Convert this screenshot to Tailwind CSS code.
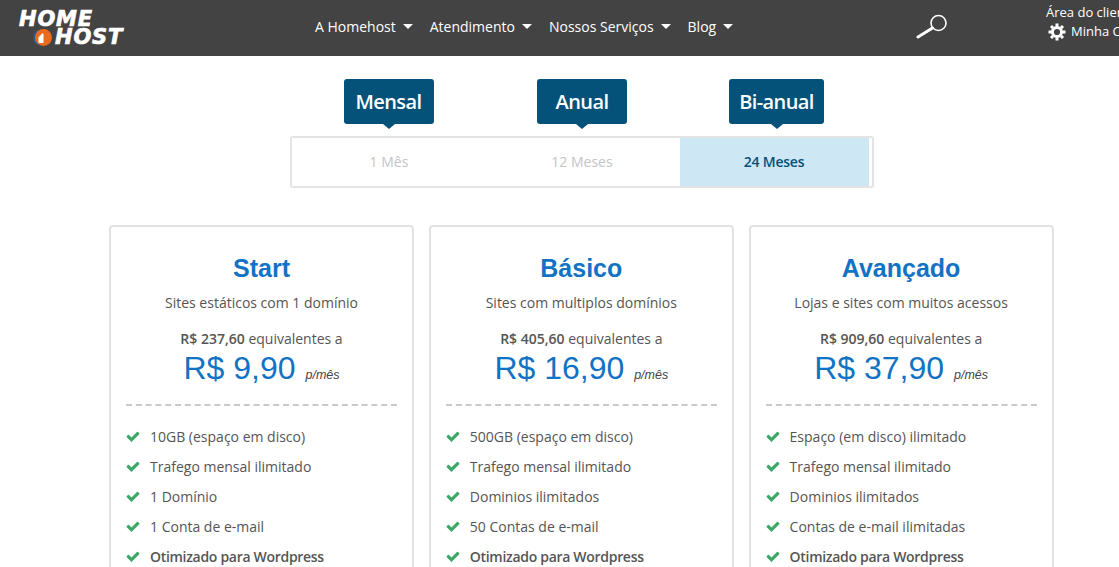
<!DOCTYPE html>
<html lang="pt-BR">
<head>
  <meta charset="UTF-8" />
  <title>Homehost - Planos</title>
  <script src="https://cdn.jsdelivr.net/npm/@tailwindcss/browser@4"></script>
</head>
<body class="bg-white h-[567px] w-[1119px] overflow-hidden font-['Open_Sans',sans-serif] text-[#555]">

  <!-- Topo -->
  <header class="h-14 bg-[#434343] flex items-center text-white relative overflow-hidden">
    <div class="w-[315px] shrink-0 pl-[19px]">
      <div class="font-['DejaVu_Sans',sans-serif] font-bold italic text-[21px] leading-[18px] tracking-[0.8px] [-webkit-text-stroke:0.7px_white]">
        <div>HOME</div>
        <div class="flex items-center pl-[14px]">
          <svg width="20" height="19" viewBox="0 0 20 19" class="shrink-0 mr-[2px]">
            <circle cx="8" cy="9.5" r="8" fill="#1f5f99" />
            <circle cx="10.5" cy="9.5" r="8.5" fill="#ec6a1c" />
            <path d="M5.5 9.5l4-4.5 1 1.5v8.5H5.500z" fill="#fff" />
          </svg>
          <span>HOST</span>
        </div>
      </div>
    </div>
    <nav class="flex items-center gap-[17px] text-[14px] whitespace-nowrap shrink-0 -mt-[4px]">
      <a class="flex items-center gap-[7px]">A Homehost <span class="w-0 h-0 border-x-[5px] border-x-transparent border-t-[5px] border-t-white"></span></a>
      <a class="flex items-center gap-[7px]">Atendimento <span class="w-0 h-0 border-x-[5px] border-x-transparent border-t-[5px] border-t-white"></span></a>
      <a class="flex items-center gap-[7px]">Nossos Serviços <span class="w-0 h-0 border-x-[5px] border-x-transparent border-t-[5px] border-t-white"></span></a>
      <a class="flex items-center gap-[7px]">Blog <span class="w-0 h-0 border-x-[5px] border-x-transparent border-t-[5px] border-t-white"></span></a>
    </nav>
    <svg width="34" height="26" viewBox="0 0 34 26" class="ml-[182px] shrink-0 -mt-[4px]" fill="none" stroke="#fff">
      <circle cx="23.500" cy="10" r="7.500" stroke-width="1.600" />
      <path d="M17.500 15L3 24" stroke-width="3" stroke-linecap="round" />
    </svg>
    <div class="absolute left-[1046px] top-[3px] text-[13px] leading-[19px] whitespace-nowrap">
      <div>Área do cliente</div>
      <div class="flex items-center gap-[5px] pl-[2px]">
        <svg width="18" height="18" viewBox="0 0 18 18" fill="none" stroke="#fff">
          <circle cx="9" cy="9" r="4.600" stroke-width="3" />
          <path d="M9 0.500v3M9 14.500v3M0.500 9h3M14.500 9h3M3 3l2 2M13 13l2 2M15 3l-2 2M5 13l-2 2" stroke-width="3" />
        </svg>
        <span>Minha Conta</span>
      </div>
    </div>
  </header>

  <!-- Periodo -->
  <section class="w-[584px] ml-[290px] mt-[23px]">
    <div class="flex pl-[54px] gap-[103px]">
      <div class="relative w-[90px] h-[45px] bg-[#04517a] rounded-[3px] text-white font-semibold text-[20px] tracking-[-0.6px] flex items-center justify-center pr-[1px]">
        Mensal
        <span class="absolute left-1/2 -translate-x-1/2 top-full w-0 h-0 border-x-[6px] border-x-transparent border-t-[5px] border-t-[#04517a]"></span>
      </div>
      <div class="relative w-[90px] h-[45px] bg-[#04517a] rounded-[3px] text-white font-semibold text-[20px] tracking-[-0.6px] flex items-center justify-center">
        Anual
        <span class="absolute left-1/2 -translate-x-1/2 top-full w-0 h-0 border-x-[6px] border-x-transparent border-t-[5px] border-t-[#04517a]"></span>
      </div>
      <div class="relative w-[95px] h-[45px] bg-[#04517a] rounded-[3px] text-white font-semibold text-[20px] tracking-[-0.6px] flex items-center justify-center -ml-[1px]">
        Bi-anual
        <span class="absolute left-1/2 -translate-x-1/2 top-full w-0 h-0 border-x-[6px] border-x-transparent border-t-[5px] border-t-[#04517a]"></span>
      </div>
    </div>
    <div class="mt-[12px] h-[52px] border-2 border-[#e4e4e4] rounded-[3px] flex text-[14px] pr-[3px] pb-[1px]">
      <div class="w-[194px] flex items-center justify-center text-[#c4c4c4]">1 Mês</div>
      <div class="w-[192px] mr-[2px] flex items-center justify-center text-[#c4c4c4]">12 Meses</div>
      <div class="flex-1 bg-[#cde7f5] text-[#04517a] font-semibold tracking-[-0.2px] flex items-center justify-center -mb-[1px] pb-[1px] pr-[1px]">24 Meses</div>
    </div>
  </section>

  <!-- Planos -->
  <section class="ml-[109px] mt-[37px] flex gap-[14.8px]">

    <article class="w-[305px] h-[500px] shrink-0 border-2 border-[#e2e2e2] rounded-[4px] px-[15px] text-center">
      <h2 class="mt-[26px] font-['Liberation_Sans',sans-serif] font-bold text-[25px] leading-[30px] text-[#1273c4]">Start</h2>
      <p class="mt-[10px] text-[14px] leading-[20px]">Sites estáticos com 1 domínio</p>
      <p class="mt-[16px] text-[14px] leading-[20px]"><b class="font-semibold">R$ 237,60</b> equivalentes a</p>
      <p class="font-['Liberation_Sans',sans-serif] text-[#1273c4] text-[32px] leading-[38px]">R$ 9,90 <i class="text-[#444] text-[12.5px] ml-[1px]">p/mês</i></p>
      <div class="mt-[10px] border-t-2 border-dashed border-[#c9c9c9]"></div>
      <ul class="mt-[16px] text-left text-[14px] leading-[30px]">
        <li class="flex items-center gap-[9px]"><svg width="15" height="15" viewBox="0 0 1792 1792" class="-translate-y-[1px] -translate-x-[0.5px]"><path d="M1671 566q0 40-28 68l-724 724-136 136q-28 28-68 28t-68-28l-136-136-362-362q-28-28-28-68t28-68l136-136q28-28 68-28t68 28l294 295 656-657q28-28 68-28t68 28l136 136q28 28 28 68z" fill="#3ca866" /></svg>10GB (espaço em disco)</li>
        <li class="flex items-center gap-[9px]"><svg width="15" height="15" viewBox="0 0 1792 1792" class="-translate-y-[1px] -translate-x-[0.5px]"><path d="M1671 566q0 40-28 68l-724 724-136 136q-28 28-68 28t-68-28l-136-136-362-362q-28-28-28-68t28-68l136-136q28-28 68-28t68 28l294 295 656-657q28-28 68-28t68 28l136 136q28 28 28 68z" fill="#3ca866" /></svg>Trafego mensal ilimitado</li>
        <li class="flex items-center gap-[9px]"><svg width="15" height="15" viewBox="0 0 1792 1792" class="-translate-y-[1px] -translate-x-[0.5px]"><path d="M1671 566q0 40-28 68l-724 724-136 136q-28 28-68 28t-68-28l-136-136-362-362q-28-28-28-68t28-68l136-136q28-28 68-28t68 28l294 295 656-657q28-28 68-28t68 28l136 136q28 28 28 68z" fill="#3ca866" /></svg>1 Domínio</li>
        <li class="flex items-center gap-[9px]"><svg width="15" height="15" viewBox="0 0 1792 1792" class="-translate-y-[1px] -translate-x-[0.5px]"><path d="M1671 566q0 40-28 68l-724 724-136 136q-28 28-68 28t-68-28l-136-136-362-362q-28-28-28-68t28-68l136-136q28-28 68-28t68 28l294 295 656-657q28-28 68-28t68 28l136 136q28 28 28 68z" fill="#3ca866" /></svg>1 Conta de e-mail</li>
        <li class="flex items-center gap-[9px] font-semibold tracking-[-0.3px]"><svg width="15" height="15" viewBox="0 0 1792 1792" class="-translate-y-[1px] -translate-x-[0.5px]"><path d="M1671 566q0 40-28 68l-724 724-136 136q-28 28-68 28t-68-28l-136-136-362-362q-28-28-28-68t28-68l136-136q28-28 68-28t68 28l294 295 656-657q28-28 68-28t68 28l136 136q28 28 28 68z" fill="#3ca866" /></svg>Otimizado para Wordpress</li>
      </ul>
    </article>

    <article class="w-[305px] h-[500px] shrink-0 border-2 border-[#e2e2e2] rounded-[4px] px-[15px] text-center">
      <h2 class="mt-[26px] font-['Liberation_Sans',sans-serif] font-bold text-[25px] leading-[30px] text-[#1273c4]">Básico</h2>
      <p class="mt-[10px] text-[14px] leading-[20px]">Sites com multiplos domínios</p>
      <p class="mt-[16px] text-[14px] leading-[20px]"><b class="font-semibold">R$ 405,60</b> equivalentes a</p>
      <p class="font-['Liberation_Sans',sans-serif] text-[#1273c4] text-[32px] leading-[38px]">R$ 16,90 <i class="text-[#444] text-[12.5px] ml-[1px]">p/mês</i></p>
      <div class="mt-[10px] border-t-2 border-dashed border-[#c9c9c9]"></div>
      <ul class="mt-[16px] text-left text-[14px] leading-[30px]">
        <li class="flex items-center gap-[9px]"><svg width="15" height="15" viewBox="0 0 1792 1792" class="-translate-y-[1px] -translate-x-[0.5px]"><path d="M1671 566q0 40-28 68l-724 724-136 136q-28 28-68 28t-68-28l-136-136-362-362q-28-28-28-68t28-68l136-136q28-28 68-28t68 28l294 295 656-657q28-28 68-28t68 28l136 136q28 28 28 68z" fill="#3ca866" /></svg>500GB (espaço em disco)</li>
        <li class="flex items-center gap-[9px]"><svg width="15" height="15" viewBox="0 0 1792 1792" class="-translate-y-[1px] -translate-x-[0.5px]"><path d="M1671 566q0 40-28 68l-724 724-136 136q-28 28-68 28t-68-28l-136-136-362-362q-28-28-28-68t28-68l136-136q28-28 68-28t68 28l294 295 656-657q28-28 68-28t68 28l136 136q28 28 28 68z" fill="#3ca866" /></svg>Trafego mensal ilimitado</li>
        <li class="flex items-center gap-[9px]"><svg width="15" height="15" viewBox="0 0 1792 1792" class="-translate-y-[1px] -translate-x-[0.5px]"><path d="M1671 566q0 40-28 68l-724 724-136 136q-28 28-68 28t-68-28l-136-136-362-362q-28-28-28-68t28-68l136-136q28-28 68-28t68 28l294 295 656-657q28-28 68-28t68 28l136 136q28 28 28 68z" fill="#3ca866" /></svg>Dominios ilimitados</li>
        <li class="flex items-center gap-[9px]"><svg width="15" height="15" viewBox="0 0 1792 1792" class="-translate-y-[1px] -translate-x-[0.5px]"><path d="M1671 566q0 40-28 68l-724 724-136 136q-28 28-68 28t-68-28l-136-136-362-362q-28-28-28-68t28-68l136-136q28-28 68-28t68 28l294 295 656-657q28-28 68-28t68 28l136 136q28 28 28 68z" fill="#3ca866" /></svg>50 Contas de e-mail</li>
        <li class="flex items-center gap-[9px] font-semibold tracking-[-0.3px]"><svg width="15" height="15" viewBox="0 0 1792 1792" class="-translate-y-[1px] -translate-x-[0.5px]"><path d="M1671 566q0 40-28 68l-724 724-136 136q-28 28-68 28t-68-28l-136-136-362-362q-28-28-28-68t28-68l136-136q28-28 68-28t68 28l294 295 656-657q28-28 68-28t68 28l136 136q28 28 28 68z" fill="#3ca866" /></svg>Otimizado para Wordpress</li>
      </ul>
    </article>

    <article class="w-[305px] h-[500px] shrink-0 border-2 border-[#e2e2e2] rounded-[4px] px-[15px] text-center">
      <h2 class="mt-[26px] font-['Liberation_Sans',sans-serif] font-bold text-[25px] leading-[30px] text-[#1273c4]">Avançado</h2>
      <p class="mt-[10px] text-[14px] leading-[20px]">Lojas e sites com muitos acessos</p>
      <p class="mt-[16px] text-[14px] leading-[20px]"><b class="font-semibold">R$ 909,60</b> equivalentes a</p>
      <p class="font-['Liberation_Sans',sans-serif] text-[#1273c4] text-[32px] leading-[38px]">R$ 37,90 <i class="text-[#444] text-[12.5px] ml-[1px]">p/mês</i></p>
      <div class="mt-[10px] border-t-2 border-dashed border-[#c9c9c9]"></div>
      <ul class="mt-[16px] text-left text-[14px] leading-[30px]">
        <li class="flex items-center gap-[9px]"><svg width="15" height="15" viewBox="0 0 1792 1792" class="-translate-y-[1px] -translate-x-[0.5px]"><path d="M1671 566q0 40-28 68l-724 724-136 136q-28 28-68 28t-68-28l-136-136-362-362q-28-28-28-68t28-68l136-136q28-28 68-28t68 28l294 295 656-657q28-28 68-28t68 28l136 136q28 28 28 68z" fill="#3ca866" /></svg>Espaço (em disco) ilimitado</li>
        <li class="flex items-center gap-[9px]"><svg width="15" height="15" viewBox="0 0 1792 1792" class="-translate-y-[1px] -translate-x-[0.5px]"><path d="M1671 566q0 40-28 68l-724 724-136 136q-28 28-68 28t-68-28l-136-136-362-362q-28-28-28-68t28-68l136-136q28-28 68-28t68 28l294 295 656-657q28-28 68-28t68 28l136 136q28 28 28 68z" fill="#3ca866" /></svg>Trafego mensal ilimitado</li>
        <li class="flex items-center gap-[9px]"><svg width="15" height="15" viewBox="0 0 1792 1792" class="-translate-y-[1px] -translate-x-[0.5px]"><path d="M1671 566q0 40-28 68l-724 724-136 136q-28 28-68 28t-68-28l-136-136-362-362q-28-28-28-68t28-68l136-136q28-28 68-28t68 28l294 295 656-657q28-28 68-28t68 28l136 136q28 28 28 68z" fill="#3ca866" /></svg>Dominios ilimitados</li>
        <li class="flex items-center gap-[9px]"><svg width="15" height="15" viewBox="0 0 1792 1792" class="-translate-y-[1px] -translate-x-[0.5px]"><path d="M1671 566q0 40-28 68l-724 724-136 136q-28 28-68 28t-68-28l-136-136-362-362q-28-28-28-68t28-68l136-136q28-28 68-28t68 28l294 295 656-657q28-28 68-28t68 28l136 136q28 28 28 68z" fill="#3ca866" /></svg>Contas de e-mail ilimitadas</li>
        <li class="flex items-center gap-[9px] font-semibold tracking-[-0.3px]"><svg width="15" height="15" viewBox="0 0 1792 1792" class="-translate-y-[1px] -translate-x-[0.5px]"><path d="M1671 566q0 40-28 68l-724 724-136 136q-28 28-68 28t-68-28l-136-136-362-362q-28-28-28-68t28-68l136-136q28-28 68-28t68 28l294 295 656-657q28-28 68-28t68 28l136 136q28 28 28 68z" fill="#3ca866" /></svg>Otimizado para Wordpress</li>
      </ul>
    </article>

  </section>
</body>
</html>
